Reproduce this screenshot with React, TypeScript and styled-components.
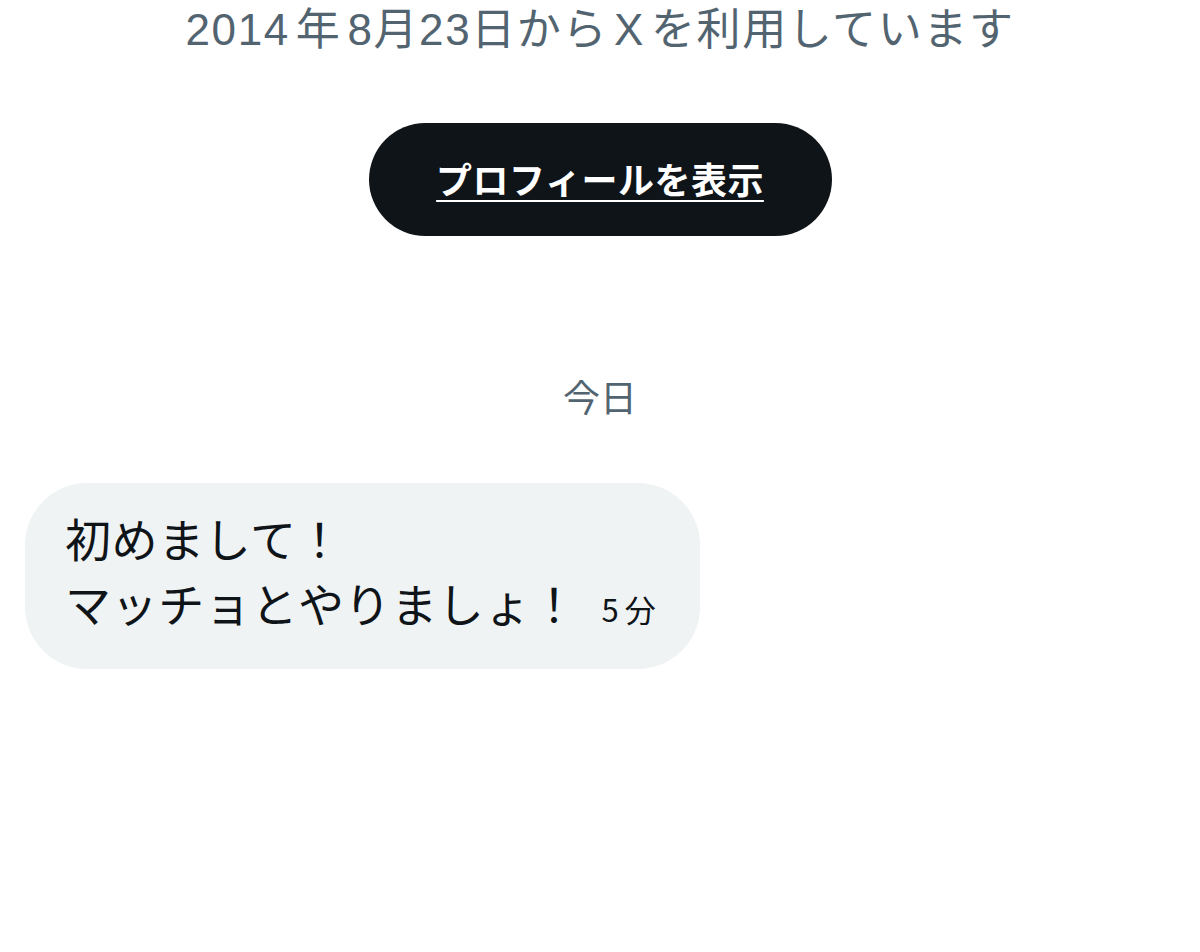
import { createGlobalStyle } from "styled-components";
import styled from "styled-components";

const GlobalStyle = createGlobalStyle`
  html, body {
    margin: 0;
    padding: 0;
    background: #ffffff;
  }
  body {
    font-family: "Liberation Sans", "Noto Sans CJK JP", sans-serif;
  }
`;

const Page = styled.div`
  width: 1200px;
  height: 952px;
  overflow: hidden;
  display: flex;
  flex-direction: column;
  align-items: center;
`;

const JoinedText = styled.div`
  margin-top: 2px;
  font-size: 44px;
  line-height: 56px;
  color: #536471;
  letter-spacing: 1.6px;
  white-space: nowrap;
`;

const Gap = styled.span`
  display: inline-block;
  width: 6px;
`;

const ProfileButton = styled.button`
  margin-top: 65px;
  width: 463px;
  height: 113px;
  border: none;
  border-radius: 57px;
  background: #0f1419;
  color: #ffffff;
  font-family: "Noto Sans CJK JP", sans-serif;
  font-size: 36px;
  font-weight: 600;
  letter-spacing: 0.5px;
  text-decoration: underline;
  text-underline-offset: 6px;
  text-decoration-thickness: 2px;
  padding: 0 0 4px;
  display: flex;
  align-items: center;
  justify-content: center;
  cursor: pointer;
`;

const DayLabel = styled.div`
  margin-top: 138px;
  font-family: "Noto Sans CJK JP", sans-serif;
  font-size: 37px;
  line-height: 44px;
  color: #536471;
`;

const MessageRow = styled.div`
  align-self: stretch;
  display: flex;
  justify-content: flex-start;
  padding-left: 25px;
  margin-top: 65px;
`;

const Bubble = styled.div`
  width: 675px;
  height: 186px;
  box-sizing: border-box;
  background: #eff3f4;
  border-radius: 62px;
  padding: 22px 0 0 40px;
  font-family: "Noto Sans CJK JP", sans-serif;
  color: #0f1419;
`;

const Line = styled.div`
  font-size: 46px;
  line-height: 65px;
  letter-spacing: 0.6px;
  white-space: nowrap;
  display: flex;
  align-items: baseline;
`;

const Time = styled.span`
  font-size: 31px;
  letter-spacing: 6px;
  margin-left: 24px;
  color: #0f1419;
`;

export default function App() {
  return (
    <>
      <GlobalStyle />
      <Page>
        <JoinedText>
          2014<Gap />年<Gap />8月23日から<Gap />X<Gap />を利用しています
        </JoinedText>
        <ProfileButton>プロフィールを表示</ProfileButton>
        <DayLabel>今日</DayLabel>
        <MessageRow>
          <Bubble>
            <Line>初めまして！</Line>
            <Line>
              マッチョとやりましょ！<Time>5分</Time>
            </Line>
          </Bubble>
        </MessageRow>
      </Page>
    </>
  );
}
